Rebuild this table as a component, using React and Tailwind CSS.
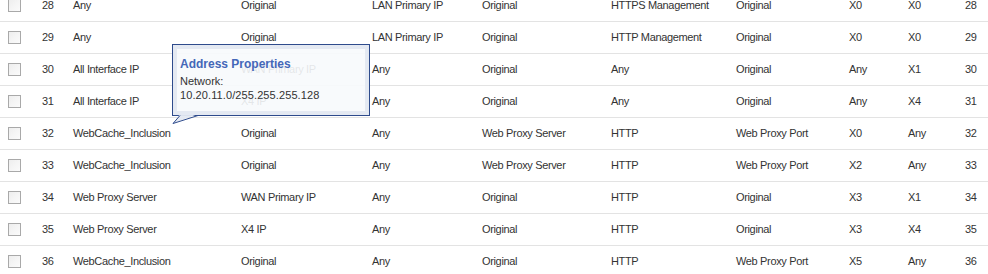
import React from "react";

const rows = [
  ["28", "Any", "Original", "LAN Primary IP", "Original", "HTTPS Management", "Original", "X0", "X0"],
  ["29", "Any", "Original", "LAN Primary IP", "Original", "HTTP Management", "Original", "X0", "X0"],
  ["30", "All Interface IP", "WAN Primary IP", "Any", "Original", "Any", "Original", "Any", "X1"],
  ["31", "All Interface IP", "X4 IP", "Any", "Original", "Any", "Original", "Any", "X4"],
  ["32", "WebCache_Inclusion", "Original", "Any", "Web Proxy Server", "HTTP", "Web Proxy Port", "X0", "Any"],
  ["33", "WebCache_Inclusion", "Original", "Any", "Web Proxy Server", "HTTP", "Web Proxy Port", "X2", "Any"],
  ["34", "Web Proxy Server", "WAN Primary IP", "Any", "Original", "HTTP", "Original", "X3", "X1"],
  ["35", "Web Proxy Server", "X4 IP", "Any", "Original", "HTTP", "Original", "X3", "X4"],
  ["36", "WebCache_Inclusion", "Original", "Any", "Original", "HTTP", "Web Proxy Port", "X5", "Any"],
];

function Row({ r }) {
  return (
    <div className="flex items-center h-[32px] border-b border-[#e3e3e3] pl-[8px] text-[#333333]">
      <div className="w-[34px] shrink-0 flex">
        <div className="w-[13px] h-[13px] border border-[#a9a9a9] bg-gradient-to-br from-[#eeeeee] to-[#fbfbfb]" />
      </div>
      <div className="w-[31px] shrink-0">{r[0]}</div>
      <div className="w-[168px] shrink-0">{r[1]}</div>
      <div className="w-[131px] shrink-0">{r[2]}</div>
      <div className="w-[110px] shrink-0">{r[3]}</div>
      <div className="w-[129px] shrink-0">{r[4]}</div>
      <div className="w-[125px] shrink-0">{r[5]}</div>
      <div className="w-[113px] shrink-0">{r[6]}</div>
      <div className="w-[59px] shrink-0">{r[7]}</div>
      <div className="w-[57px] shrink-0">{r[8]}</div>
      <div className="shrink-0">{r[0]}</div>
    </div>
  );
}

export default function App() {
  return (
    <div
      className="relative w-[988px] h-[274px] overflow-hidden bg-white text-[11px] tracking-[-0.35px]"
      style={{ fontFamily: '"Liberation Sans", Arial, sans-serif' }}
    >
      <div className="-mt-[10px]">
        {rows.map((r) => (
          <Row key={r[0]} r={r} />
        ))}
      </div>

      {/* tooltip */}
      <div className="absolute left-[172px] top-[44px] w-[198px] h-[72px] border border-[#2e4b8c] tracking-normal">
        <div className="w-full h-full border-[4px] border-[rgba(226,231,241,0.92)] bg-[rgba(247,249,252,0.9)] pl-[3px] pt-[8px]">
          <div className="text-[12px] font-bold text-[#4467b8] leading-[14px]">Address Properties</div>
          <div className="text-[#333333] leading-[14px] mt-[3px]">Network:</div>
          <div className="text-[#333333] leading-[14px] tracking-[0.1px]">10.20.11.0/255.255.255.128</div>
        </div>
      </div>
      <svg className="absolute left-[170px] top-[113px]" width="32" height="12" viewBox="0 0 32 12">
        <polygon points="10,1 28,1 3,10.5" fill="rgba(228,233,242,0.95)" />
        <line x1="10" y1="2.5" x2="3" y2="10.5" stroke="#2e4b8c" strokeWidth="1" />
        <line x1="3" y1="10.5" x2="28" y2="2.5" stroke="#2e4b8c" strokeWidth="1" />
      </svg>
    </div>
  );
}
